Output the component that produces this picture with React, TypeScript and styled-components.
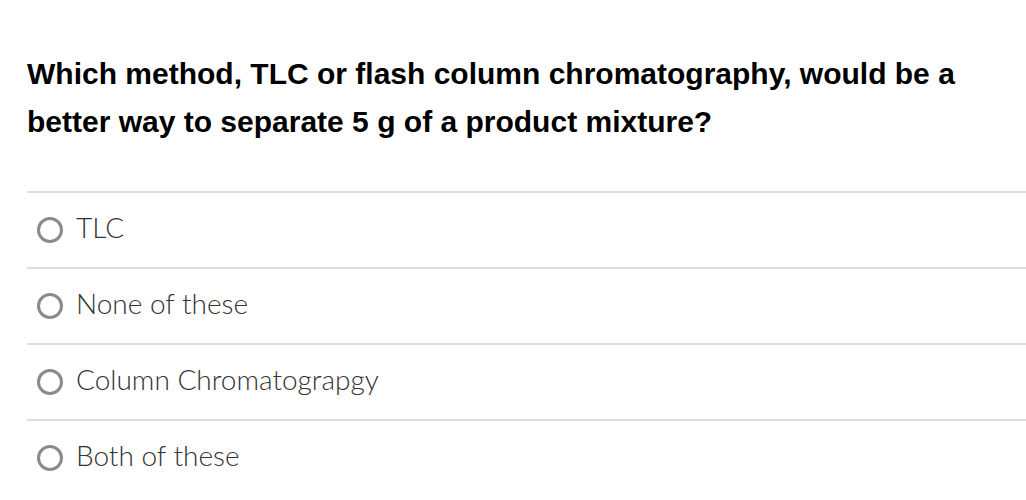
import styled, { createGlobalStyle } from "styled-components";

const GlobalStyle = createGlobalStyle`
  html, body {
    margin: 0;
    padding: 0;
    background: #ffffff;
  }
`;

const answers = ["TLC", "None of these", "Column Chromatograpgy", "Both of these"];

export default function App() {
  return (
    <>
      <GlobalStyle />
      <StyledPage>
        <StyledQuestion>
          Which method, TLC or flash column chromatography, would be a better way to separate 5 g of a
          product mixture?
        </StyledQuestion>
        <StyledAnswers>
          {answers.map((answer) => (
            <StyledAnswer key={answer}>
              <StyledRadio />
              <StyledLabel>{answer}</StyledLabel>
            </StyledAnswer>
          ))}
        </StyledAnswers>
      </StyledPage>
    </>
  );
}

const StyledPage = styled.div`
  width: 1026px;
  height: 500px;
  overflow: hidden;
  padding: 50px 0 0 27px;
  box-sizing: border-box;
`;

const StyledQuestion = styled.p`
  margin: 0;
  width: 960px;
  font-family: "Liberation Sans", Arial, sans-serif;
  font-weight: 700;
  font-size: 30px;
  line-height: 48px;
  color: #000000;
`;

const StyledAnswers = styled.div`
  margin-top: 45px;
  display: flex;
  flex-direction: column;
`;

const StyledAnswer = styled.label`
  height: 76px;
  display: flex;
  align-items: center;
  gap: 13px;
  padding-left: 10px;
  border-top: 2px solid #dddddd;
  box-sizing: border-box;
`;

const StyledRadio = styled.span`
  width: 26px;
  height: 26px;
  box-sizing: border-box;
  border-radius: 50%;
  border: 3px solid #8a8a8a;
  flex-shrink: 0;
`;

const StyledLabel = styled.span`
  margin-bottom: 6px;
  font-family: Lato, "Noto Sans", sans-serif;
  font-weight: 300;
  font-size: 28px;
  color: #333333;
`;
